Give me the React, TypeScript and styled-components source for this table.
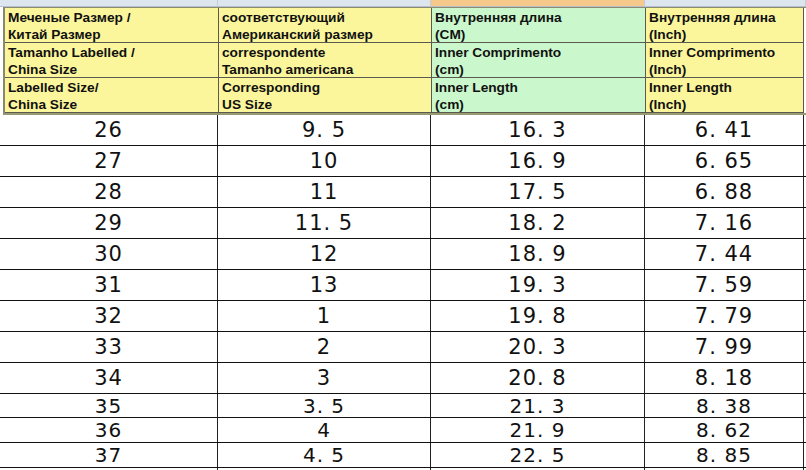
import React from 'react';
import styled, { createGlobalStyle } from 'styled-components';

const GlobalStyle = createGlobalStyle`
    html, body {
        margin: 0;
        padding: 0;
        background: #fff;
        overflow: hidden;
    }
`;

const cols = '218px 213px 214px 159px';

const Page = styled.div`
    width: 806px;
    height: 470px;
    overflow: hidden;
    background: #fff;
    font-family: "Liberation Sans", Arial, sans-serif;
`;

const TopStrip = styled.div`
    display: grid;
    grid-template-columns: 218px 213px 214px 1fr;
    height: 7px;
    background: #dde5ef;
`;

const StripCell = styled.div<{ $active?: boolean }>`
    background: ${p => (p.$active ? '#f6c98a' : '#dde5ef')};
    border-right: 1px solid #c3ccd8;
    border-bottom: 1px solid #b7c0cc;
`;

const Header = styled.div`
    display: grid;
    grid-template-columns: 214px 213px 214px 158px;
    margin-left: 3px;
    border-left: 2px solid #8a8a70;
    border-top: 1px solid #8a8a70;
    border-bottom: 2px solid #9b9b73;
`;

const HeaderCell = styled.div<{ $tone: 'yellow' | 'green' }>`
    background: ${p => (p.$tone === 'green' ? '#caf7cb' : '#fbf69c')};
    border-right: 1px solid #5a5a50;
    border-bottom: 1px solid #5a5a50;
    height: 35px;
    box-sizing: border-box;
    padding: 1px 3px 0;
    font-weight: bold;
    font-size: 13.7px;
    line-height: 17px;
    color: #111;
    white-space: nowrap;
    overflow: hidden;
`;

const DataRow = styled.div<{ $h: number }>`
    display: grid;
    grid-template-columns: ${cols};
    height: ${p => p.$h}px;
    border-bottom: 1px solid #111;
    box-sizing: border-box;
`;

const DataCell = styled.div<{ $small?: boolean }>`
    display: flex;
    align-items: center;
    justify-content: center;
    border-right: 1px solid #222;
    font-family: "DejaVu Sans", sans-serif;
    font-size: ${p => (p.$small ? 20 : 21)}px;
    letter-spacing: 1px;
    color: #111;
`;

const headRows = [
    ['Меченые Размер /', 'Китай Размер', 'соответствующий', 'Американский размер', 'Внутренняя длина', '(CM)', 'Внутренняя длина', '(Inch)'],
    ['Tamanho Labelled /', 'China Size', 'correspondente', 'Tamanho americana', 'Inner Comprimento', '(cm)', 'Inner Comprimento', '(Inch)'],
    ['Labelled Size/', 'China Size', 'Corresponding', 'US Size', 'Inner Length', '(cm)', 'Inner Length', '(Inch)'],
];

const sizes = [
    ['26', '9.5', '16.3', '6.41'],
    ['27', '10', '16.9', '6.65'],
    ['28', '11', '17.5', '6.88'],
    ['29', '11.5', '18.2', '7.16'],
    ['30', '12', '18.9', '7.44'],
    ['31', '13', '19.3', '7.59'],
    ['32', '1', '19.8', '7.79'],
    ['33', '2', '20.3', '7.99'],
    ['34', '3', '20.8', '8.18'],
    ['35', '3.5', '21.3', '8.38'],
    ['36', '4', '21.9', '8.62'],
    ['37', '4.5', '22.5', '8.85'],
];

// visible text shows a gap after the point, like the original sheet font
const spaced = (v: string) => v.replace('.', '. ');

export default function App() {
    return (
        <Page>
            <GlobalStyle />
            <TopStrip>
                <StripCell />
                <StripCell />
                <StripCell $active />
                <StripCell />
            </TopStrip>
            <Header>
                {headRows.map((r, i) =>
                    [0, 2, 4, 6].map(c => (
                        <HeaderCell key={`h${i}-${c}`} $tone={c === 4 ? 'green' : 'yellow'}>
                            {r[c]}
                            <br />
                            {r[c + 1]}
                        </HeaderCell>
                    ))
                )}
            </Header>
            {sizes.map((row, i) => (
                <DataRow key={row[0]} $h={i < 9 ? 31 : i === 9 ? 24 : 25}>
                    {row.map((v, j) => (
                        <DataCell key={j} $small={i >= 9}>{spaced(v)}</DataCell>
                    ))}
                </DataRow>
            ))}
            <DataRow $h={20}>
                <DataCell />
                <DataCell />
                <DataCell />
                <DataCell />
            </DataRow>
        </Page>
    );
}
